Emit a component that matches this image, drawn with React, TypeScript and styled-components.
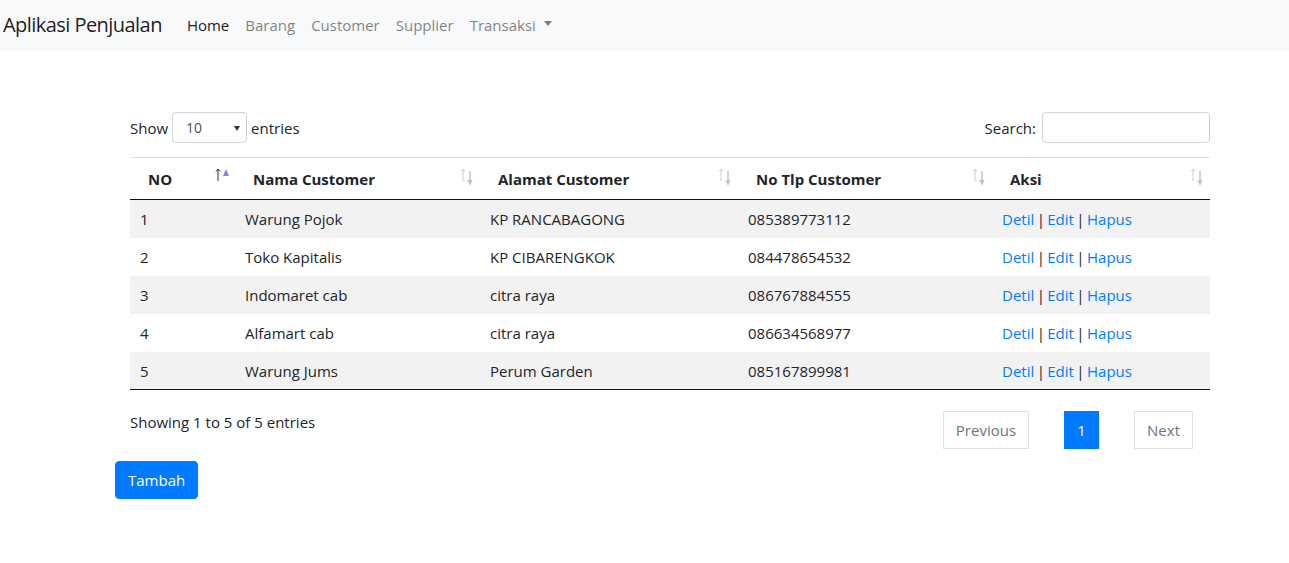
import React from "react";
import styled, { createGlobalStyle } from "styled-components";

const GlobalStyle = createGlobalStyle`
  html, body { margin: 0; padding: 0; background: #fff; }
  body {
    font-family: "Open Sans", "Noto Sans", sans-serif;
    font-size: 16px;
    color: #212529;
  }
  * { box-sizing: border-box; }
`;

const Navbar = styled.nav`
  display: flex;
  align-items: center;
  height: 51px;
  padding: 0 16px 2px 3px;
  background: #f8f9fa;
`;

const Brand = styled.a`
  font-size: 20px;
  letter-spacing: -0.55px;
  color: rgba(0, 0, 0, 0.9);
  margin-right: 17px;
  text-decoration: none;
`;

const NavLink = styled.a<{ $active?: boolean }>`
  display: flex;
  align-items: center;
  padding: 8px;
  font-size: 15px;
  color: ${(p) => (p.$active ? "rgba(0,0,0,0.9)" : "rgba(0,0,0,0.5)")};
  text-decoration: none;
`;

const Caret = styled.span`
  display: inline-block;
  margin-left: 8px;
  border-top: 5px solid rgba(0, 0, 0, 0.5);
  border-left: 4.5px solid transparent;
  border-right: 4.5px solid transparent;
  margin-top: -2px;
`;

const Main = styled.main`
  padding: 61px 79px 0 115px;
`;

const Wrapper = styled.div`
  padding-left: 15px;
`;

const TopBar = styled.div`
  display: flex;
  justify-content: space-between;
  align-items: center;
  height: 31px;
  margin-bottom: 14px;
`;

const Label = styled.label`
  display: flex;
  align-items: center;
  gap: 4px;
  font-size: 15px;
`;

const SelectBox = styled.div`
  position: relative;
  width: 75px;
  height: 31px;
  border: 1px solid #ced4da;
  border-radius: 4px;
  display: flex;
  align-items: center;
  padding-left: 13px;
  font-size: 14px;
  color: #495057;
`;

const SelectArrow = styled.span`
  position: absolute;
  right: 6px;
  top: 13px;
  border-top: 5px solid #333;
  border-left: 3px solid transparent;
  border-right: 3px solid transparent;
`;

const SearchInput = styled.input`
  width: 168px;
  height: 31px;
  border: 1px solid #ced4da;
  border-radius: 4px;
  margin-left: 2px;
`;

const Table = styled.table`
  width: 1080px;
  border-collapse: collapse;
  border-top: 1px solid #dee2e6;
  border-bottom: 1px solid #111;
`;

const Th = styled.th<{ $w: number }>`
  position: relative;
  width: ${(p) => p.$w}px;
  height: 42px;
  padding: 0 18px;
  text-align: left;
  font-weight: bold;
  font-size: 15px;
  border-bottom: 1px solid #111;
`;

const SortIcon = styled.svg`
  position: absolute;
  right: 5px;
  top: 9px;
`;

const Tr = styled.tr<{ $odd: boolean }>`
  background: ${(p) => (p.$odd ? "#f2f2f2" : "#fff")};
  & + & td { border-top: 1px solid #ddd; }
`;

const Td = styled.td`
  height: 38px;
  padding: 1px 10px 0;
  font-size: 15px;
`;

const ActionCell = styled(Td)`
  word-spacing: -1.5px;
`;

const Link = styled.a`
  color: #007bff;
  text-decoration: none;
`;

const BottomBar = styled.div`
  display: flex;
  justify-content: space-between;
  align-items: flex-start;
  margin-top: 21px;
  padding-right: 17px;
`;

const Info = styled.div`
  font-size: 15px;
  margin-top: 1px;
`;

const Pagination = styled.div`
  display: flex;
  gap: 35px;
`;

const PageBtn = styled.a<{ $active?: boolean }>`
  display: flex;
  align-items: center;
  justify-content: center;
  height: 38px;
  padding: 0 12px;
  min-width: 35px;
  font-size: 15px;
  border: 1px solid ${(p) => (p.$active ? "#007bff" : "#dee2e6")};
  background: ${(p) => (p.$active ? "#007bff" : "#fff")};
  color: ${(p) => (p.$active ? "#fff" : "#6c757d")};
`;

const Button = styled.button`
  margin-top: 12px;
  height: 38px;
  padding: 0 12px;
  background: #007bff;
  border: 1px solid #007bff;
  border-radius: 4px;
  color: #fff;
  font-family: inherit;
  font-size: 15px;
`;

const Sort = ({ active }: { active?: boolean }) => (
  <SortIcon width="17" height="20" viewBox="0 0 17 20">
    <path d="M5 2 L5 14 M3 4.5 L5 2 L7 4.5" stroke={active ? "#333" : "#ccc"} strokeWidth="1" fill="none" />
    {active ? (
      <path d="M10 9 L13 2 L16 9 Z" fill="#7b87d6" />
    ) : (
      <path d="M12 4 L12 17 M10 13 L12 17 L14 13" stroke="#c4c4c4" strokeWidth="1.5" fill="none" />
    )}
  </SortIcon>
);

const rows = [
  ["1", "Warung Pojok", "KP RANCABAGONG", "085389773112"],
  ["2", "Toko Kapitalis", "KP CIBARENGKOK", "084478654532"],
  ["3", "Indomaret cab", "citra raya", "086767884555"],
  ["4", "Alfamart cab", "citra raya", "086634568977"],
  ["5", "Warung Jums", "Perum Garden", "085167899981"],
];

const cols: [string, number][] = [
  ["NO", 105],
  ["Nama Customer", 245],
  ["Alamat Customer", 258],
  ["No Tlp Customer", 254],
  ["Aksi", 218],
];

export default function App() {
  return (
    <>
      <GlobalStyle />
      <Navbar>
        <Brand>Aplikasi Penjualan</Brand>
        <NavLink $active>Home</NavLink>
        <NavLink>Barang</NavLink>
        <NavLink>Customer</NavLink>
        <NavLink>Supplier</NavLink>
        <NavLink>
          Transaksi <Caret />
        </NavLink>
      </Navbar>
      <Main>
        <Wrapper>
          <TopBar>
            <Label>
              Show
              <SelectBox>
                10
                <SelectArrow />
              </SelectBox>
              entries
            </Label>
            <Label>
              Search:
              <SearchInput />
            </Label>
          </TopBar>
          <Table>
            <thead>
              <tr>
                {cols.map(([c, w], i) => (
                  <Th key={c} $w={w}>
                    {c}
                    <Sort active={i === 0} />
                  </Th>
                ))}
              </tr>
            </thead>
            <tbody>
              {rows.map((r, i) => (
                <Tr key={r[0]} $odd={i % 2 === 0}>
                  {r.map((c, j) => (
                    <Td key={j}>{c}</Td>
                  ))}
                  <ActionCell>
                    <Link>Detil</Link> | <Link>Edit</Link> | <Link>Hapus</Link>
                  </ActionCell>
                </Tr>
              ))}
            </tbody>
          </Table>
          <BottomBar>
            <Info>Showing 1 to 5 of 5 entries</Info>
            <Pagination>
              <PageBtn>Previous</PageBtn>
              <PageBtn $active>1</PageBtn>
              <PageBtn>Next</PageBtn>
            </Pagination>
          </BottomBar>
        </Wrapper>
        <Button>Tambah</Button>
      </Main>
    </>
  );
}
